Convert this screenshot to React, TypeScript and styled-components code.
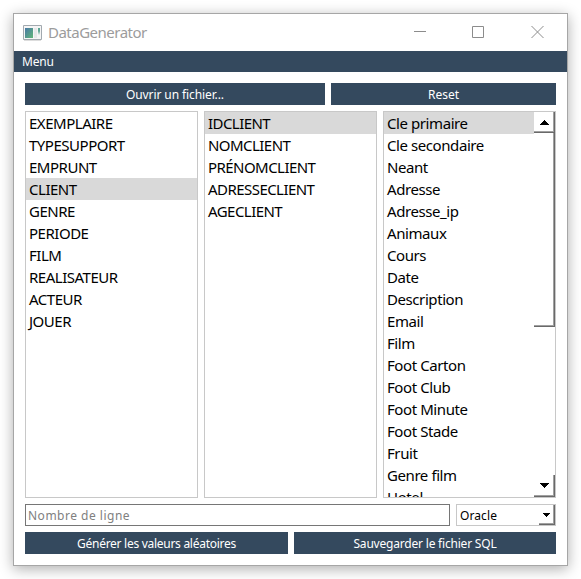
import React from "react";
import styled, { createGlobalStyle } from "styled-components";

const GlobalStyle = createGlobalStyle`
  * { box-sizing: border-box; }
  html, body { margin: 0; background: #fff; }
  body { height: 579px; overflow: hidden; font-family: "Noto Sans", "Open Sans", sans-serif; color: #000; }
`;

const Desktop = styled.div`
  width: 581px;
  height: 579px;
  padding: 13px;
  overflow: hidden;
`;

const Window = styled.main`
  width: 555px;
  height: 553px;
  border: 1px solid #a6a6a6;
  background: #fff;
  box-shadow: 0 3px 13px rgba(0, 0, 0, 0.32);
`;

const TitleBar = styled.header`
  display: flex;
  align-items: center;
  height: 37px;
  padding-left: 9px;
`;

const Title = styled.h1`
  flex: 1;
  margin: 0 0 2px 6px;
  font-size: 15px;
  line-height: 20px;
  font-weight: 400;
  letter-spacing: -0.5px;
  color: #9c9c9c;
`;

const Caption = styled.div`
  display: flex;
  margin: 0 23px 2px 0;
`;

const MenuBar = styled.nav`
  height: 21px;
  padding-left: 8px;
  background: #34495e;
  color: #fff;
  font-size: 12px;
  line-height: 21px;
  letter-spacing: -0.2px;
`;

const Content = styled.section`
  display: flex;
  flex-direction: column;
  gap: 6px;
  padding: 11px 11px 0;
`;

const Row = styled.div<{ $columns: string; $height: number }>`
  display: grid;
  grid-template-columns: ${(p) => p.$columns};
  gap: 6px;
  width: 531px;
  height: ${(p) => p.$height}px;
`;

const Button = styled.button<{ $spacing?: number }>`
  border: 0;
  padding: 1px 0 0;
  background: #34495e;
  color: #fff;
  font: 12px/21px "Noto Sans", sans-serif;
  letter-spacing: ${(p) => p.$spacing ?? 0}px;
`;

const ListBox = styled.div`
  display: flex;
  height: 387px;
  border: 1px solid #c8c8c8;
  overflow: hidden;
`;

const Items = styled.ul`
  flex: 1;
  margin: 0;
  padding: 0;
  list-style: none;
`;

const Item = styled.li<{ $selected: boolean; $spacing: number }>`
  height: 22px;
  padding-left: 3px;
  background: ${(p) => (p.$selected ? "#d9d9d9" : "transparent")};
  font-size: 15px;
  line-height: 23px;
  letter-spacing: ${(p) => p.$spacing}px;
  white-space: nowrap;
`;

const ScrollBar = styled.div`
  display: flex;
  flex-direction: column;
  width: 21px;
  height: 385px;
`;

const Raised = styled.div<{ $height: number }>`
  display: flex;
  align-items: center;
  justify-content: center;
  height: ${(p) => p.$height}px;
  border-right: 1px solid #696969;
  border-bottom: 1px solid #696969;
  box-shadow: inset -1px -1px #a0a0a0;
`;

const Track = styled.div`
  flex: 1;
`;

const LineInput = styled.input`
  width: 425px;
  height: 22px;
  padding: 1px 2px 0;
  border: 1px solid #767676;
  border-radius: 0;
  outline: 0;
  font: 12px "Noto Sans", sans-serif;
  letter-spacing: 0.5px;
  &::placeholder { color: #808080; opacity: 1; }
`;

const Select = styled.div`
  display: grid;
  grid-template-columns: 1fr 16px;
  height: 22px;
  padding-left: 3px;
  border: 1px solid #c8c8c8;
  font-size: 12px;
  line-height: 21px;
  letter-spacing: 0.1px;
`;

const Arrow = ({ up = false, small = false }: { up?: boolean; small?: boolean }) => (
  <svg width={small ? 7 : 9} height={small ? 4 : 5} viewBox="0 0 9 5" preserveAspectRatio="none" shapeRendering="crispEdges">
    <path d={up ? "M0 5L4 0H5L9 5Z" : "M0 0H9L5 5H4Z"} />
  </svg>
);

const AppIcon = () => (
  <svg width="19" height="16" viewBox="0 0 19 16">
    <defs>
      <linearGradient id="screen" x1="0" y1="0" x2="1" y2="1">
        <stop offset="0" stopColor="#4777a5" />
        <stop offset="1" stopColor="#62b779" />
      </linearGradient>
    </defs>
    <path d="M.5 .5h18v14H.5z" fill="#f5f5f5" stroke="#a2a9af" />
    <path d="M1 15.5h17" stroke="#ddd" />
    <path d="M2 3h8v10H2z" fill="url(#screen)" />
    <path d="M11 3h3v10h-3z" fill="#e6e8e9" />
    <path d="M15 3h2v3l-1 4-1-4z" fill="#5fa795" />
  </svg>
);

const tables = ["EXEMPLAIRE", "TYPESUPPORT", "EMPRUNT", "CLIENT", "GENRE", "PERIODE", "FILM", "REALISATEUR", "ACTEUR", "JOUER"];
const columns = ["IDCLIENT", "NOMCLIENT", "PRÉNOMCLIENT", "ADRESSECLIENT", "AGECLIENT"];
const types = ["Cle primaire", "Cle secondaire", "Neant", "Adresse", "Adresse_ip", "Animaux", "Cours", "Date", "Description", "Email", "Film", "Foot Carton", "Foot Club", "Foot Minute", "Foot Stade", "Fruit", "Genre film", "Hotel"];

const List = ({ items, selected, spacing, scroll }: { items: string[]; selected: string; spacing: number; scroll?: boolean }) => (
  <ListBox>
    <Items>
      {items.map((item) => (
        <Item key={item} $selected={item === selected} $spacing={spacing}>{item}</Item>
      ))}
    </Items>
    {scroll && (
      <ScrollBar>
        <Raised $height={21}><Arrow up /></Raised>
        <Raised $height={194} />
        <Track />
        <Raised $height={22}><Arrow /></Raised>
      </ScrollBar>
    )}
  </ListBox>
);

export default function App() {
  return (
    <Desktop>
      <GlobalStyle />
      <Window>
        <TitleBar>
          <AppIcon />
          <Title>DataGenerator</Title>
          <Caption>
            <svg width="130" height="12" viewBox="0 0 130 12" fill="none" stroke="#8c8c8c">
              <path d="M0 5.5h12M58.5 .5h11v11h-11z" />
              <path d="M117.5 0l12 12M129.5 0l-12 12" />
            </svg>
          </Caption>
        </TitleBar>
        <MenuBar>Menu</MenuBar>
        <Content>
          <Row $columns="300px 225px" $height={22}>
            <Button $spacing={-0.1}>Ouvrir un fichier...</Button>
            <Button>Reset</Button>
          </Row>
          <Row $columns="repeat(3, 173px)" $height={387}>
            <List items={tables} selected="CLIENT" spacing={-0.48} />
            <List items={columns} selected="IDCLIENT" spacing={-0.55} />
            <List items={types} selected="Cle primaire" spacing={-0.42} scroll />
          </Row>
          <Row $columns="425px 100px" $height={22}>
            <LineInput placeholder="Nombre de ligne" />
            <Select>
              Oracle
              <Raised $height={20}><Arrow small /></Raised>
            </Select>
          </Row>
          <Row $columns="263px 262px" $height={22}>
            <Button $spacing={-0.28}>Générer les valeurs aléatoires</Button>
            <Button $spacing={-0.2}>Sauvegarder le fichier SQL</Button>
          </Row>
        </Content>
      </Window>
    </Desktop>
  );
}
